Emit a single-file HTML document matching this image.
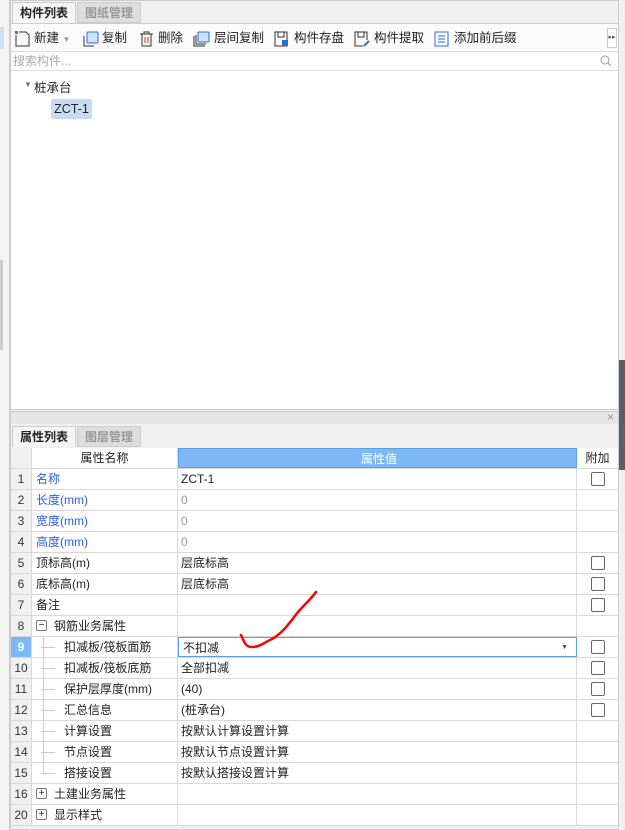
<!DOCTYPE html>
<html><head><meta charset="utf-8"><style>
*{margin:0;padding:0;box-sizing:border-box}
body{width:625px;height:830px;background:#f0f0f0;position:relative;overflow:hidden;font-family:"Liberation Sans","Noto Sans CJK SC",sans-serif;font-size:12px;color:#222}
.a{position:absolute}
.tab{position:absolute;height:21px;line-height:21px;text-align:center;font-weight:bold;font-size:12px}
.tb{position:absolute;top:29px;height:18px;line-height:18px;font-size:12.5px;white-space:nowrap}
.row{position:absolute;left:11px;width:607px;height:21px;border-bottom:1px solid #d8d8d8;background:#fff}
.row div{position:absolute;top:0;height:20px;line-height:20px;white-space:nowrap}
.n{left:0;width:21px;text-align:center;background:#f0f0f0;border-right:1px solid #d8d8d8;color:#333}
.k{left:21px;width:146px;border-right:1px solid #d8d8d8;padding-left:4px}
.v{left:167px;width:399px;border-right:1px solid #d8d8d8;padding-left:3px}
.x{left:566px;width:41px}
.cb{position:absolute;left:580px;top:3px;width:14px;height:14px;border:1px solid #666;border-radius:2px;background:#fff}
.blue{color:#2b5ee8}.gray{color:#999}
.ln{position:absolute;left:9px;width:14px;top:10px;border-top:1px solid #ccc}
.sub{padding-left:32px!important}
.pm{position:absolute;left:4px;top:4px;width:11px;height:11px;border:1px solid #777;border-radius:2px;font-size:10px;line-height:9px;text-align:center;background:#fff}
</style></head><body>
<div class="a" style="left:0;top:0;width:10px;height:830px;background:#f3f3f3;border-right:1px solid #ccc"></div>
<div class="a" style="left:0;top:27px;width:4px;height:22px;background:#cfe0f5"></div>
<div class="a" style="left:0;top:260px;width:3px;height:90px;background:#ccc"></div>
<div class="a" style="left:619px;top:360px;width:6px;height:110px;background:#5a5e66"></div>
<!-- top panel -->
<div class="a" style="left:10px;top:0;width:609px;height:410px;background:#fff;border:1px solid #ccc"></div>
<div class="a" style="left:11px;top:1px;width:607px;height:23px;background:#f0f0f0;border-bottom:1px solid #ccc"></div>
<div class="tab" style="left:12px;top:2px;width:64px;background:#f5f5f5;border:1px solid #ccc;border-bottom:none">构件列表</div>
<div class="tab" style="left:77px;top:2px;width:64px;background:#ddd;color:#999;border:1px solid #ccc">图纸管理</div>
<div class="a" style="left:11px;top:24px;width:607px;height:28px;background:#fafafa;border-bottom:1px solid #ddd"></div>
<svg class="a" style="left:14px;top:30px" width="18" height="18"><rect x="1" y="1" width="3" height="3" fill="#3a7bd5"/><path d="M2 5v11h13V5l-3-3H5" fill="none" stroke="#333"/></svg>
<div class="tb" style="left:34px">新建 <span style="color:#999;font-size:8px">▼</span></div>
<svg class="a" style="left:82px;top:30px" width="18" height="18"><path d="M2 6v10h10" fill="none" stroke="#333"/><rect x="5" y="2" width="11" height="11" rx="1" fill="#cfe2fb" stroke="#2b6fd6"/></svg>
<div class="tb" style="left:102px">复制</div>
<svg class="a" style="left:138px;top:30px" width="18" height="18"><path d="M2 4h13M6 4V2h5v2M4 4v12h9V4" fill="none" stroke="#333"/><path d="M7 7v6M10 7v6" stroke="#d22" /></svg>
<div class="tb" style="left:158px">删除</div>
<svg class="a" style="left:193px;top:30px" width="18" height="18"><path d="M1 6v10h11M3 5v9h10" fill="none" stroke="#333"/><rect x="5" y="2" width="11" height="10" rx="1" fill="#cfe2fb" stroke="#2b6fd6"/></svg>
<div class="tb" style="left:214px">层间复制</div>
<svg class="a" style="left:273px;top:30px" width="18" height="18"><path d="M2 2h12v14H2zM5 2v5h6V2" fill="none" stroke="#333"/><rect x="9" y="10" width="6" height="6" fill="#2b6fd6"/></svg>
<div class="tb" style="left:294px">构件存盘</div>
<svg class="a" style="left:353px;top:30px" width="18" height="18"><path d="M10 16H2V2h12v8M5 2v5h6V2" fill="none" stroke="#333"/><path d="M11 16l5-5" stroke="#2b6fd6" stroke-width="2"/></svg>
<div class="tb" style="left:374px">构件提取</div>
<svg class="a" style="left:433px;top:30px" width="18" height="18"><rect x="2" y="2" width="13" height="14" fill="none" stroke="#2b6fd6"/><path d="M5 6h7M5 9h7M5 12h7" stroke="#2b6fd6"/></svg>
<div class="tb" style="left:454px">添加前后缀</div>
<div class="a" style="left:607px;top:28px;width:10px;height:20px;border:1px solid #ccc;background:#fff;font-size:7px;line-height:18px;text-align:center;color:#555">▸▸</div>
<div class="a" style="left:11px;top:52px;width:607px;height:19px;border-bottom:1px solid #ddd;color:#aaa;padding-left:2px;line-height:18px;font-size:12px">搜索构件...</div>
<svg class="a" style="left:600px;top:55px" width="12" height="12"><circle cx="5" cy="5" r="4" fill="none" stroke="#999"/><path d="M8 8l3 3" stroke="#999"/></svg>
<div class="a" style="left:24px;top:80px;font-size:8px;color:#777">▼</div>
<div class="a" style="left:34px;top:77px;font-size:12.5px">桩承台</div>
<div class="a" style="left:51px;top:99px;width:41px;height:20px;background:#c7dcf2;border-radius:2px;line-height:20px;text-align:center;font-size:12.5px">ZCT-1</div>
<!-- bottom panel -->
<div class="a" style="left:10px;top:411px;width:609px;height:419px;background:#f0f0f0;border:1px solid #ccc"></div>
<div class="a" style="left:11px;top:412px;width:607px;height:12px;background:#e6e6e6"></div>
<div class="a" style="left:607px;top:410px;color:#999;font-size:12px">×</div>
<div class="tab" style="left:12px;top:426px;width:64px;background:#f5f5f5;border:1px solid #ccc;border-bottom:none">属性列表</div>
<div class="tab" style="left:77px;top:426px;width:64px;background:#ddd;color:#999;border:1px solid #ccc">图层管理</div>
<div class="row" style="top:448px"><div class="n"></div><div class="k" style="text-align:center;padding:0">属性名称</div><div class="v" style="background:#7db8f5;color:#fff;text-align:center;border:1px solid #5c9ee8">属性值</div><div class="x" style="text-align:center">附加</div></div>
<div class="row" style="top:469px"><div class="n">1</div><div class="k blue">名称</div><div class="v">ZCT-1</div><div class="x"></div><span class="cb"></span></div>
<div class="row" style="top:490px"><div class="n">2</div><div class="k blue">长度(mm)</div><div class="v gray">0</div><div class="x"></div></div>
<div class="row" style="top:511px"><div class="n">3</div><div class="k blue">宽度(mm)</div><div class="v gray">0</div><div class="x"></div></div>
<div class="row" style="top:532px"><div class="n">4</div><div class="k blue">高度(mm)</div><div class="v gray">0</div><div class="x"></div></div>
<div class="row" style="top:553px"><div class="n">5</div><div class="k">顶标高(m)</div><div class="v">层底标高</div><div class="x"></div><span class="cb"></span></div>
<div class="row" style="top:574px"><div class="n">6</div><div class="k">底标高(m)</div><div class="v">层底标高</div><div class="x"></div><span class="cb"></span></div>
<div class="row" style="top:595px"><div class="n">7</div><div class="k">备注</div><div class="v"></div><div class="x"></div><span class="cb"></span></div>
<div class="row" style="top:616px"><div class="n">8</div><div class="k" style="padding-left:22px"><span class="pm">−</span>钢筋业务属性</div><div class="v"></div><div class="x"></div></div>
<div class="row" style="top:637px"><div class="n" style="background:#7db8f5;color:#fff;font-weight:bold">9</div><div class="k sub"><span class="ln"></span>扣减板/筏板面筋</div><div class="v" style="border:1px solid #5c9ee8;padding-left:4px">不扣减<span style="position:absolute;right:8px;font-size:7px;color:#555">▼</span></div><div class="x"></div><span class="cb"></span></div>
<div class="row" style="top:658px"><div class="n">10</div><div class="k sub"><span class="ln"></span>扣减板/筏板底筋</div><div class="v">全部扣减</div><div class="x"></div><span class="cb"></span></div>
<div class="row" style="top:679px"><div class="n">11</div><div class="k sub"><span class="ln"></span>保护层厚度(mm)</div><div class="v">(40)</div><div class="x"></div><span class="cb"></span></div>
<div class="row" style="top:700px"><div class="n">12</div><div class="k sub"><span class="ln"></span>汇总信息</div><div class="v">(桩承台)</div><div class="x"></div><span class="cb"></span></div>
<div class="row" style="top:721px"><div class="n">13</div><div class="k sub"><span class="ln"></span>计算设置</div><div class="v">按默认计算设置计算</div><div class="x"></div></div>
<div class="row" style="top:742px"><div class="n">14</div><div class="k sub"><span class="ln"></span>节点设置</div><div class="v">按默认节点设置计算</div><div class="x"></div></div>
<div class="row" style="top:763px"><div class="n">15</div><div class="k sub"><span class="ln"></span>搭接设置</div><div class="v">按默认搭接设置计算</div><div class="x"></div></div>
<div class="a" style="left:43px;top:637px;height:137px;border-left:1px solid #ccc"></div>
<div class="row" style="top:784px"><div class="n">16</div><div class="k" style="padding-left:22px"><span class="pm">+</span>土建业务属性</div><div class="v"></div><div class="x"></div></div>
<div class="row" style="top:805px"><div class="n">20</div><div class="k" style="padding-left:22px"><span class="pm">+</span>显示样式</div><div class="v"></div><div class="x"></div></div>
<svg class="a" style="left:0;top:0" width="625" height="830"><path d="M241 635 C244 641 245 647 252 647 C260 647 265 642 272 639 C283 633 290 622 298 612 C305 604 312 598 316 592" fill="none" stroke="#f00" stroke-width="2.5" stroke-linecap="round"/></svg>
</body></html>
